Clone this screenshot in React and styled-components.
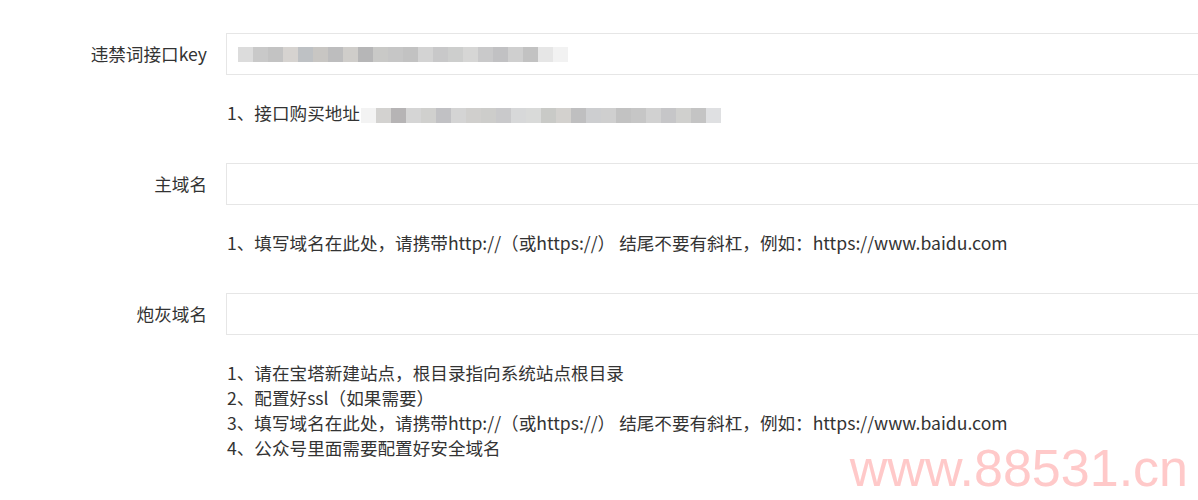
import styled, { createGlobalStyle } from "styled-components";

const GlobalStyle = createGlobalStyle`
  html, body {
    margin: 0;
    padding: 0;
    background: #ffffff;
    overflow: hidden;
  }
  body {
    font-family: "Noto Sans CJK SC", "Noto Sans", sans-serif;
    color: #333333;
  }
`;

const KEY_BLOCKS = [
  "#dcdcdc", "#c9c9c9", "#c3c3c3", "#d6d3d0", "#bec1c4", "#c8c6c3",
  "#bdbdbe", "#cfcdca", "#b6b6b7", "#c9c9c7", "#c6c6c6", "#c2c2c2",
  "#d3d3d3", "#c8c8c9", "#cdcecd", "#d6d6d5", "#c9c9ca", "#c1c1c3",
  "#cfcfcf", "#c2c2c2", "#e6e6e6", "#f2f2f2",
];

const LINK_BLOCKS = [
  "#f3f3f3", "#d3d2d0", "#b6b4b5", "#d5d5d5", "#d0d0ce", "#c1c1c4",
  "#d4d4d4", "#d0cfcd", "#cdcdcb", "#c9c9cb", "#d7d8d9", "#d9dad9",
  "#c9cac7", "#d3d1ce", "#bfbfc0", "#cdced0", "#cfcfcf", "#c2c2c2",
  "#c6c6c6", "#d1d1d1", "#c6c6c8", "#d0d0ce", "#c4c4c4", "#dfe0e2",
];

export default function App() {
  return (
    <>
      <GlobalStyle />
      <Page>
        <Form>
          <Item>
            <Row>
              <Label>违禁词接口key</Label>
              <Field>
                <Mosaic>
                  {KEY_BLOCKS.map((c, i) => (
                    <Cell key={i} style={{ background: c }} />
                  ))}
                </Mosaic>
              </Field>
            </Row>
            <Help>
              <Line>
                1、接口购买地址
                <Mosaic $inline>
                  {LINK_BLOCKS.map((c, i) => (
                    <Cell key={i} style={{ background: c }} />
                  ))}
                </Mosaic>
              </Line>
            </Help>
          </Item>

          <Item>
            <Row>
              <Label>主域名</Label>
              <Field />
            </Row>
            <Help>
              <Line>
                1、填写域名在此处，请携带http://（或https://） 结尾不要有斜杠，例如：https://www.baidu.com
              </Line>
            </Help>
          </Item>

          <Item>
            <Row>
              <Label>炮灰域名</Label>
              <Field />
            </Row>
            <Help>
              <Line>1、请在宝塔新建站点，根目录指向系统站点根目录</Line>
              <Line>2、配置好ssl（如果需要）</Line>
              <Line>
                3、填写域名在此处，请携带http://（或https://） 结尾不要有斜杠，例如：https://www.baidu.com
              </Line>
              <Line>4、公众号里面需要配置好安全域名</Line>
            </Help>
          </Item>
        </Form>
        <Watermark>www.88531.cn</Watermark>
      </Page>
    </>
  );
}

const Page = styled.div`
  position: relative;
  width: 1198px;
  height: 500px;
  overflow: hidden;
  padding-top: 33px;
  box-sizing: border-box;
`;

const Form = styled.div`
  width: 1230px;
  display: flex;
  flex-direction: column;
`;

const Item = styled.div`
  display: flex;
  flex-direction: column;
  margin-bottom: 38px;
`;

const Row = styled.div`
  display: flex;
  align-items: center;
`;

const Label = styled.div`
  flex: 0 0 207px;
  padding-right: 19px;
  box-sizing: content-box;
  text-align: right;
  font-size: 17.6px;
  line-height: 42px;
  color: #333333;
`;

const Field = styled.div`
  flex: 1;
  height: 42px;
  box-sizing: border-box;
  border: 1px solid #e6e6e6;
  background: #ffffff;
  display: flex;
  align-items: center;
  padding-left: 11px;
`;

const Mosaic = styled.span`
  display: inline-flex;
  height: 15px;
  vertical-align: middle;
  margin-left: ${(p) => (p.$inline ? "1px" : "0")};
`;

const Cell = styled.span`
  width: 15px;
  height: 15px;
`;

const Help = styled.div`
  margin-top: 25px;
  margin-left: 227px;
  display: flex;
  flex-direction: column;
`;

const Line = styled.div`
  font-size: 17.6px;
  line-height: 25px;
  color: #333333;
  white-space: nowrap;
`;

const Watermark = styled.div`
  position: absolute;
  right: 10px;
  bottom: 6px;
  font-family: "Liberation Sans", Arial, sans-serif;
  font-size: 52px;
  line-height: 52px;
  color: #ffc9c9;
  pointer-events: none;
`;
